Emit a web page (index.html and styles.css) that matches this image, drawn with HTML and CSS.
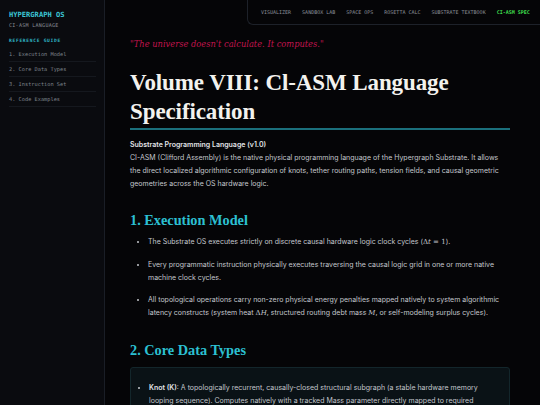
FILE: index.html
```html
<!DOCTYPE html>
<html>
<head>
<meta charset="utf-8">
<link rel="stylesheet" href="styles.css">
</head>
<body>
<div class="app">
  <aside class="sidebar">
    <div class="brand">HYPERGRAPH OS</div>
    <div class="brand-sub">CI-ASM LANGUAGE</div>
    <div class="guide-title">REFERENCE GUIDE</div>
    <ul class="guide">
      <li>1. Execution Model</li>
      <li>2. Core Data Types</li>
      <li>3. Instruction Set</li>
      <li>4. Code Examples</li>
    </ul>
  </aside>
  <main class="main">
    <div class="content">
      <p class="quote">"The universe doesn't calculate. It computes."</p>
      <h1 class="title">Volume VIII: Cl-ASM Language Specification</h1>
      <p class="intro"><strong>Substrate Programming Language (v1.0)</strong><br>CI-ASM (Clifford Assembly) is the native physical programming language of the Hypergraph Substrate. It allows the direct localized algorithmic configuration of knots, tether routing paths, tension fields, and causal geometric geometries across the OS hardware logic.</p>
      <h2 class="section">1. Execution Model</h2>
      <ul class="bullets">
        <li>The Substrate OS executes strictly on discrete causal hardware logic clock cycles (<span class="math">Δ<i>t</i>&nbsp;=&nbsp;1</span>).</li>
        <li>Every programmatic instruction physically executes traversing the causal logic grid in one or more native machine clock cycles.</li>
        <li>All topological operations carry non-zero physical energy penalties mapped natively to system algorithmic latency constructs (system heat <span class="math">Δ<i>H</i></span>, structured routing debt mass <span class="math"><i>M</i></span>, or self-modeling surplus cycles).</li>
      </ul>
      <h2 class="section">2. Core Data Types</h2>
      <div class="card">
        <ul class="bullets card-list">
          <li><strong>Knot (K)</strong>: A topologically recurrent, causally-closed structural subgraph (a stable hardware memory looping sequence). Computes natively with a tracked Mass parameter directly mapped to required</li>
        </ul>
      </div>
    </div>
  </main>
  <nav class="topnav">
    <span class="nav-item">VISUALIZER</span>
    <span class="nav-item">SANDBOX LAB</span>
    <span class="nav-item">SPACE OPS</span>
    <span class="nav-item">ROSETTA CALC</span>
    <span class="nav-item">SUBSTRATE TEXTBOOK</span>
    <span class="nav-item active">CI-ASM SPEC</span>
  </nav>
</div>
</body>
</html>
```
FILE: styles.css
```css
* { box-sizing: border-box; }
html, body {
  margin: 0;
  padding: 0;
  background: #050507;
  width: 540px;
  height: 405px;
  overflow: hidden;
}
.app {
  position: relative;
  display: flex;
  width: 540px;
  height: 405px;
  overflow: hidden;
}
.sidebar {
  width: 105px;
  flex: none;
  height: 405px;
  background: #0a0b0f;
  border-right: 1px solid #1a1e26;
  padding: 10px 8px 0 9px;
  font-family: "DejaVu Sans Mono", monospace;
}
.brand {
  color: #3cc6d6;
  font-weight: bold;
  font-size: 7.1px;
  line-height: 9px;
}
.brand-sub {
  color: #8a8f98;
  font-size: 5px;
  line-height: 6px;
  margin-top: 3px;
  letter-spacing: 0.3px;
}
.guide-title {
  color: #2fb8c8;
  font-weight: bold;
  font-size: 4.6px;
  letter-spacing: 0.7px;
  margin-top: 10px;
  line-height: 6px;
}
.guide {
  list-style: none;
  margin: 3px 0 0 0;
  padding: 0;
}
.guide li {
  color: #7d828b;
  font-size: 5.3px;
  line-height: 6px;
  padding: 4px 0 4px 0;
  border-bottom: 1px solid #15181e;
}
.main {
  flex: 1;
  padding: 38px 30px 0 25px;
  color: #c9ccd2;
  font-family: Inter, "Noto Sans", sans-serif;
}
.content {
  width: 380px;
}
.quote {
  margin: 0;
  color: #c2144e;
  font-family: "DejaVu Serif", serif;
  font-style: italic;
  font-size: 8.3px;
  line-height: 12px;
}
.title {
  margin: 18px 0 0 0;
  color: #f3f2ee;
  font-family: "Liberation Serif", serif;
  font-weight: bold;
  font-size: 23px;
  line-height: 29px;
  letter-spacing: -0.1px;
  padding-bottom: 2px;
  border-bottom: 2px solid #1b707c;
}
.intro {
  margin: 8px 0 0 0;
  font-size: 7px;
  line-height: 13px;
  color: #c4c7cd;
}
.intro strong {
  color: #e2e4e8;
  font-weight: 600;
}
.section {
  margin: 21px 0 0 0;
  color: #2cc0d2;
  font-family: "Liberation Serif", serif;
  font-weight: bold;
  font-size: 14.3px;
  line-height: 18px;
}
.bullets {
  margin: 6px 0 0 0;
  padding: 0 0 0 18px;
  font-size: 7px;
  line-height: 13px;
  color: #c4c7cd;
}
.bullets li {
  margin-bottom: 9px;
}
.bullets li::marker {
  font-size: 6px;
}
.math {
  font-family: "DejaVu Serif", serif;
  font-size: 7px;
  white-space: nowrap;
}
.bullets strong {
  color: #e2e4e8;
  font-weight: 600;
}
.card {
  margin-top: 8px;
  background: #0a1216;
  border: 1px solid #13262b;
  border-radius: 3px;
  padding: 13px 10px 0 0;
}
.card-list {
  margin: 0;
}
.topnav {
  position: absolute;
  top: 0;
  right: 0;
  left: 247px;
  height: 25px;
  display: flex;
  align-items: center;
  padding-left: 13px;
  gap: 11px;
  background: #050507;
  border-left: 1px solid #1d2129;
  border-bottom: 1px solid #1d2129;
  border-bottom-left-radius: 6px;
  font-family: "DejaVu Sans Mono", monospace;
  font-size: 5px;
}
.nav-item {
  color: #8b9099;
  white-space: nowrap;
}
.nav-item.active {
  color: #3ddc4c;
  font-weight: bold;
}
```
